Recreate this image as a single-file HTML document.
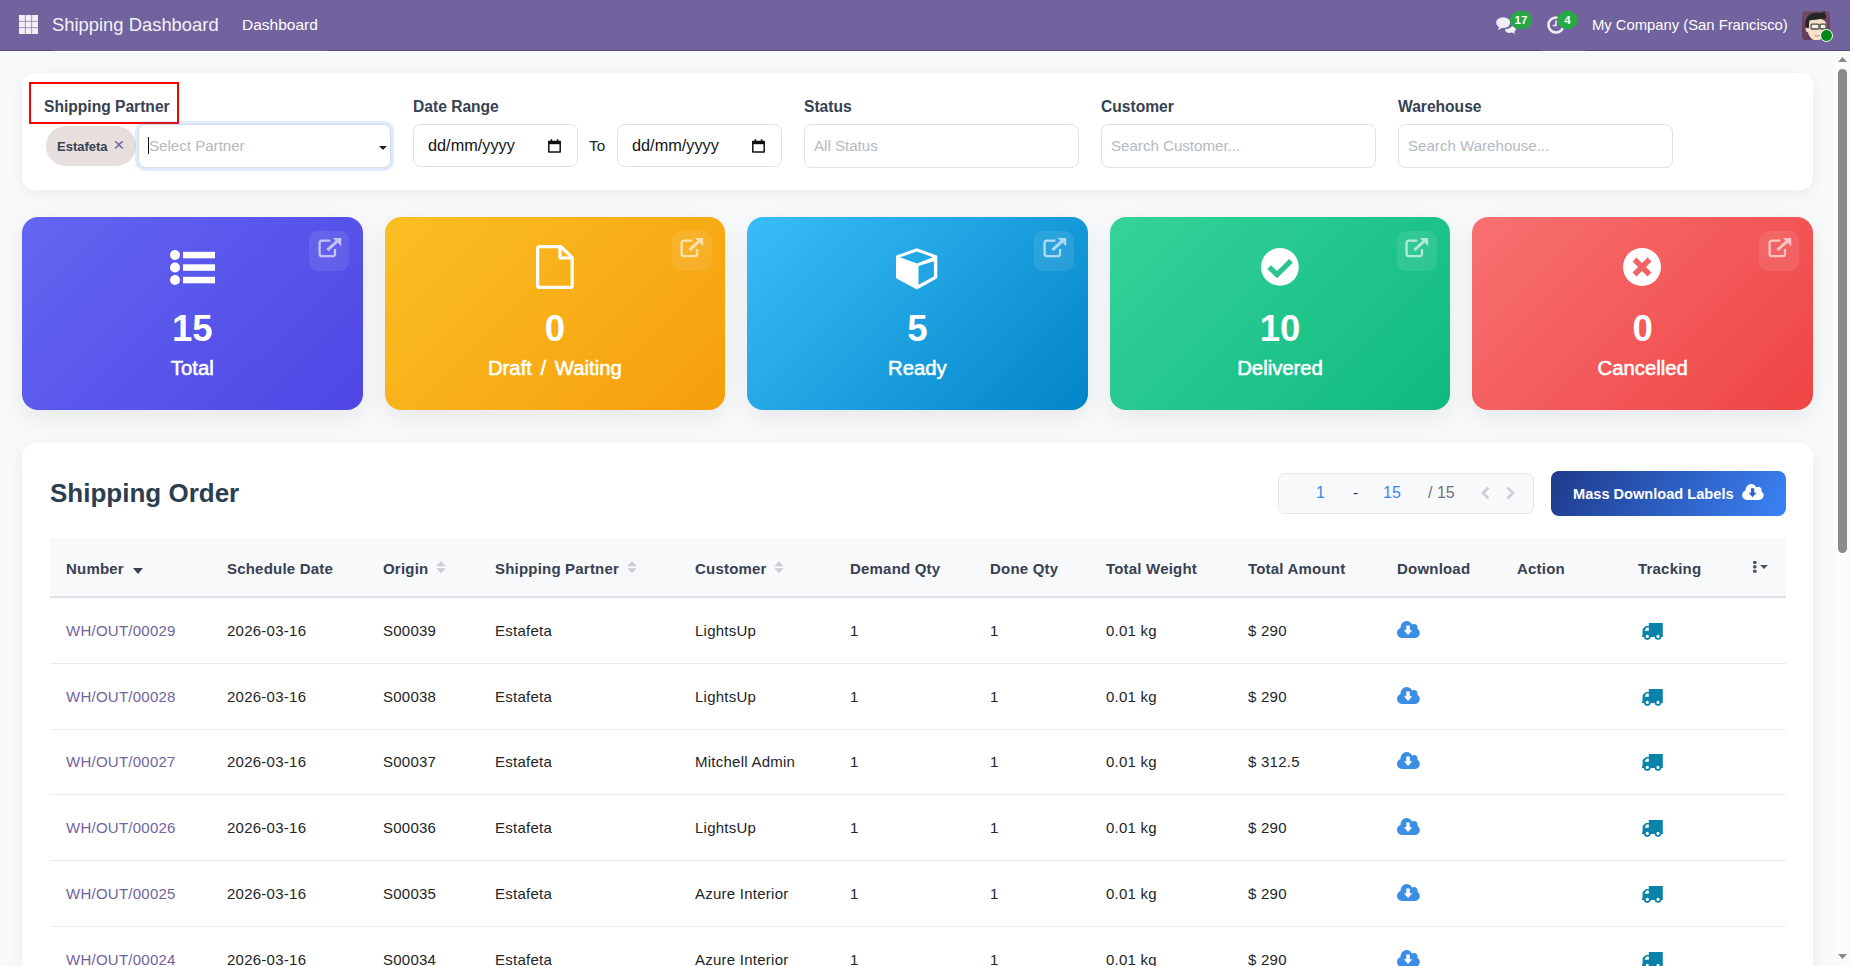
<!DOCTYPE html>
<html><head><meta charset="utf-8">
<style>
*{box-sizing:border-box;margin:0;padding:0}
html,body{width:1850px;height:966px;overflow:hidden}
body{font-family:"Liberation Sans",sans-serif;background:#f8f9fa;position:relative;color:#212529}
.abs{position:absolute}
/* navbar */
#nav{position:absolute;left:0;top:0;width:1850px;height:50px;background:#71639e}
#navline{position:absolute;left:0;top:50px;width:1850px;height:1px;background:#574a7b}
#navline2{position:absolute;left:0;top:51px;width:1835px;height:1px;background:#fff}
#nav .apps{position:absolute;left:19px;top:15px;width:19px;height:19px}
#nav .brand{position:absolute;left:52px;top:13px;font-size:18.4px;color:#f4f2f8;white-space:nowrap;line-height:24px}
#nav .menu{position:absolute;left:242px;top:15.5px;font-size:15.5px;color:#fff;line-height:18px}
#nav .company{position:absolute;left:1592px;top:15px;font-size:14.8px;color:#fff;line-height:20px;white-space:nowrap}
.badge{position:absolute;height:18px;border-radius:9px;background:#28a745;color:#fff;font-size:11.5px;font-weight:bold;text-align:center;line-height:18px}
/* scrollbar */
#sb{position:absolute;left:1835px;top:51px;width:15px;height:915px;background:#fbfbfb}
#sb .thumb{position:absolute;left:3px;top:18px;width:9px;height:484px;border-radius:5px;background:#8a8a8a}
/* filter card */
#filter{position:absolute;left:22px;top:73px;width:1791px;height:117px;background:#fff;border-radius:13px;box-shadow:0 4px 16px rgba(0,0,0,0.06)}
.flabel{position:absolute;font-size:15.6px;font-weight:bold;color:#374151;line-height:20px;white-space:nowrap;margin-top:1px}
.finput{position:absolute;top:51px;height:44px;border:1px solid #dee2e6;border-radius:7.5px;background:#fff;font-size:15.1px;line-height:41px;padding-left:9px;white-space:nowrap}
.ph{color:#b3bac2}
/* stat cards */
.stat{position:absolute;top:217px;width:340.5px;height:192.5px;border-radius:16px;color:#fff;text-align:center;box-shadow:0 8px 24px rgba(0,0,0,0.07)}
.stat .num{position:absolute;left:0;right:0;font-size:36.6px;font-weight:bold;line-height:40px}
.stat .lbl{position:absolute;left:0;right:0;font-size:20.3px;font-weight:normal;-webkit-text-stroke:0.55px #fff;line-height:24px}
.stat .ext{position:absolute;right:13.5px;top:14px;width:40px;height:40px;border-radius:9px;background:rgba(255,255,255,0.09)}
/* table card */
#tcard{position:absolute;left:22px;top:443px;width:1791px;height:600px;background:#fff;border-radius:14px;box-shadow:0 4px 16px rgba(0,0,0,0.06)}
#title{position:absolute;left:28px;top:33px;font-size:26px;font-weight:bold;color:#2c3e50;line-height:34px;white-space:nowrap}
#pager{position:absolute;left:1256px;top:30px;width:255.5px;height:41px;border:1px solid #e5e7eb;border-radius:7px;background:#f8f9fa}
#mdl{position:absolute;left:1529px;top:28px;width:235px;height:45px;border-radius:8px;background:linear-gradient(120deg,#1e3a8a 0%,#3b82f6 100%);color:#fff;font-size:14.6px;font-weight:bold;line-height:46px;white-space:nowrap}
table{position:absolute;left:28px;top:95px;width:1736px;border-collapse:collapse;table-layout:fixed}
th{height:59px;background:#f8f9fa;border-bottom:2px solid #dee2e6;text-align:left;font-size:15px;font-weight:bold;color:#374151;letter-spacing:0.2px;padding:2px 0 0 16px;white-space:nowrap;vertical-align:middle}
td{height:66px;border-bottom:1px solid #e9ecef;font-size:15px;letter-spacing:0.25px;color:#212529;padding:0 0 0 16px;white-space:nowrap;vertical-align:middle}
td.lnk{color:#71639e}
tr.r65 td{height:65px}
.sorti{display:inline-block;vertical-align:middle;margin-left:7.5px;position:relative;top:-2px}
</style></head>
<body>
<div id="nav">
  <svg class="apps" viewBox="0 0 19 19"><g fill="#f3f1f6"><rect x="0" y="0" width="5.9" height="5.9"/><rect x="6.55" y="0" width="5.9" height="5.9"/><rect x="13.1" y="0" width="5.9" height="5.9"/><rect x="0" y="6.55" width="5.9" height="5.9"/><rect x="6.55" y="6.55" width="5.9" height="5.9"/><rect x="13.1" y="6.55" width="5.9" height="5.9"/><rect x="0" y="13.1" width="5.9" height="5.9"/><rect x="6.55" y="13.1" width="5.9" height="5.9"/><rect x="13.1" y="13.1" width="5.9" height="5.9"/></g></svg>
  <div class="brand">Shipping Dashboard</div>
  <div class="menu">Dashboard</div>
  <!-- chat icon -->
  <svg class="abs" style="left:1496px;top:17px" width="21" height="17" viewBox="0 0 21 17"><g fill="#f1eff6">
    <ellipse cx="7.2" cy="5.6" rx="7" ry="5.4"/><path d="M1.5 13.2 L4 9 L7 10.5 Z"/>
    <path d="M8.8 12.2 C11 12.2 15.5 11.2 16.5 8 C18.6 9 19.8 10.4 19.8 12 C19.8 13.3 19 14.3 18 15 L19.6 16.8 L15.2 15.6 C14.5 15.8 13.6 15.9 12.9 15.9 C10.9 15.9 9.3 14.4 8.8 12.2Z"/>
  </g></svg>
  <div class="badge" style="left:1510px;top:11px;width:22px">17</div>
  <!-- clock icon -->
  <svg class="abs" style="left:1547px;top:16px" width="18" height="18" viewBox="0 0 18 18"><circle cx="9" cy="9" r="7.5" fill="none" stroke="#f1eff6" stroke-width="2.6"/><path d="M9 4.5 V9.5 H5.8" fill="none" stroke="#f1eff6" stroke-width="1.6"/></svg>
  <div class="badge" style="left:1557px;top:11px;width:21px">4</div>
  <div class="company">My Company (San Francisco)</div>
  <!-- avatar -->
  <div class="abs" style="left:1802px;top:11px;width:28px;height:29px;border-radius:4px;background:linear-gradient(180deg,#744b6a,#5f3c57);overflow:hidden">
    <svg width="28" height="29" viewBox="0 0 28 29">
      <ellipse cx="6" cy="18" rx="2.4" ry="3.3" fill="#f5d3b5"/>
      <path d="M5 14 C5 9 9 7.5 14.5 7.5 C20 7.5 24.5 9.5 24.5 15 C24.5 23 21 29.5 14.5 29.5 C8.5 29.5 5 23 5 14Z" fill="#f9e1c8"/>
      <path d="M3.5 16.5 C2.5 8 6 2 13 1.8 C17 1.6 20 2.5 22.5 0.3 C23 3 24.5 4.5 24 8 C22.5 7.6 20.5 7.5 17 8.2 C12 9 8.5 8.8 7.5 9.5 C7 12 7 15 6.8 17.5 Z" fill="#262626"/>
      <rect x="9" y="13.2" width="8" height="4.8" rx="1.2" fill="#fff" fill-opacity="0.5" stroke="#4a4a4a" stroke-width="1.3"/>
      <rect x="18" y="13.2" width="6" height="4.8" rx="1.2" fill="#fff" fill-opacity="0.5" stroke="#4a4a4a" stroke-width="1.3"/>
      <path d="M13 24.5 C14.5 25.3 16 25.3 17.5 24.5" fill="none" stroke="#9a7060" stroke-width="0.8"/>
    </svg>
  </div>
  <div class="abs" style="left:1819.5px;top:28.5px;width:13.5px;height:13.5px;border-radius:50%;background:#008a1a;border:1.5px solid #fff"></div>
</div>

<div id="navline"><div class="abs" style="left:52px;top:0;width:276px;height:1px;background:#6b5d99"></div><div class="abs" style="left:1540px;top:0;width:46px;height:1px;background:#6b5d99"></div></div>
<div id="navline2"></div>
<div id="sb">
  <svg class="abs" style="left:3px;top:6px" width="9" height="5" viewBox="0 0 9 5"><path d="M0 5 L4.5 0 L9 5Z" fill="#8a8a8a"/></svg>
  <div class="thumb"></div>
  <svg class="abs" style="left:3px;top:903px" width="9" height="5" viewBox="0 0 9 5"><path d="M0 0 L4.5 5 L9 0Z" fill="#8a8a8a"/></svg>
</div>

<div id="filter">
  <div class="abs" style="left:7px;top:9px;width:150px;height:42px;border:2px solid #ff0000"></div>
  <div class="flabel" style="left:22px;top:23px">Shipping Partner</div>
  <div class="abs" style="left:24px;top:53px;width:90px;height:40px;border-radius:20px;background:#e6dfdd;font-size:13px;font-weight:bold;color:#374151;line-height:38px;padding-left:11px;white-space:nowrap">Estafeta <span style="color:#71639e;font-weight:normal;font-size:19px;position:relative;top:0px;margin-left:2px">&#215;</span></div>
  <div class="finput" style="left:116px;width:253px;box-shadow:0 0 0 3px rgba(59,130,246,0.12),0 0 3px 3px rgba(59,130,246,0.06);border-color:#d6dde6;padding-left:9px"><span style="display:inline-block;width:1px;height:17px;background:#111;vertical-align:middle;margin-top:-3px"></span><span class="ph">Select Partner</span>
    <svg class="abs" style="right:3px;top:21px" width="8" height="4" viewBox="0 0 8 4"><path d="M0 0 L8 0 L4 4Z" fill="#212529"/></svg></div>

  <div class="flabel" style="left:391px;top:23px">Date Range</div>
  <div class="finput" style="left:391px;width:165px;padding-left:14px;color:#111;font-size:16.3px;height:43px;line-height:40px">dd/mm/yyyy
    <svg class="abs" style="left:133.5px;top:13.5px" width="13" height="14" viewBox="0 0 13 14"><path d="M0.8 2.6 H12.2 V12.9 H0.8 Z" fill="none" stroke="#111" stroke-width="1.5" stroke-linejoin="round"/><rect x="0.5" y="2" width="12" height="3.2" fill="#111"/><rect x="2.6" y="0.3" width="1.6" height="2.5" fill="#111"/><rect x="8.8" y="0.3" width="1.6" height="2.5" fill="#111"/></svg></div>
  <div class="abs" style="left:567px;top:63px;font-size:15.3px;color:#212529;line-height:20px">To</div>
  <div class="finput" style="left:595px;width:165px;padding-left:14px;color:#111;font-size:16.3px;height:43px;line-height:40px">dd/mm/yyyy
    <svg class="abs" style="left:133.5px;top:13.5px" width="13" height="14" viewBox="0 0 13 14"><path d="M0.8 2.6 H12.2 V12.9 H0.8 Z" fill="none" stroke="#111" stroke-width="1.5" stroke-linejoin="round"/><rect x="0.5" y="2" width="12" height="3.2" fill="#111"/><rect x="2.6" y="0.3" width="1.6" height="2.5" fill="#111"/><rect x="8.8" y="0.3" width="1.6" height="2.5" fill="#111"/></svg></div>

  <div class="flabel" style="left:782px;top:23px">Status</div>
  <div class="finput ph" style="left:782px;width:275px">All Status</div>

  <div class="flabel" style="left:1079px;top:23px">Customer</div>
  <div class="finput ph" style="left:1079px;width:275px">Search Customer...</div>

  <div class="flabel" style="left:1376px;top:23px">Warehouse</div>
  <div class="finput ph" style="left:1376px;width:275px">Search Warehouse...</div>
</div>

<div class="stat" style="left:22px;background:linear-gradient(135deg,#6366f1 0%,#4f46e5 100%)"><svg class="abs" style="left:148px;top:32.5px" width="45" height="35" viewBox="0 0 45 35"><g fill="#fff"><circle cx="5" cy="5" r="5"/><circle cx="5" cy="17.5" r="5"/><circle cx="5" cy="30" r="5"/><rect x="13" y="1.8" width="32" height="6.5"/><rect x="13" y="14.3" width="32" height="6.5"/><rect x="13" y="26.8" width="32" height="6.5"/></g></svg><div class="num" style="top:92px">15</div><div class="lbl" style="top:139px">Total</div><div class="ext"><svg class="abs" style="left:8.5px;top:6.5px" width="24" height="21" viewBox="0 0 24 21"><path d="M12.4 2.6 H4 C2.6 2.6 1.6 3.6 1.6 5 V15.8 C1.6 17.2 2.6 18.2 4 18.2 H14.6 C16 18.2 17 17.2 17 15.8 V11" fill="none" stroke="rgba(255,255,255,0.62)" stroke-width="2.3"/><path d="M9.4 12.2 L18.6 3.6" stroke="rgba(255,255,255,0.62)" stroke-width="3"/><path d="M14.8 0 H23.2 V8.2 Z" fill="rgba(255,255,255,0.62)"/></svg></div></div>
<div class="stat" style="left:384.6px;background:linear-gradient(135deg,#fbbf24 0%,#f59e0b 100%)"><svg class="abs" style="left:151.2px;top:28px" width="38" height="44" viewBox="0 0 38 44"><path d="M1.6 3.6 C1.6 2.5 2.5 1.6 3.6 1.6 H25 L36.2 12.6 V40.4 C36.2 41.5 35.3 42.4 34.2 42.4 H3.6 C2.5 42.4 1.6 41.5 1.6 40.4 Z M24 1.6 V12 C24 12.6 24.4 13 25 13 H36.2" fill="none" stroke="#fff" stroke-width="3.2" stroke-linejoin="round"/></svg><div class="num" style="top:92px">0</div><div class="lbl" style="top:139px;word-spacing:3px">Draft / Waiting</div><div class="ext"><svg class="abs" style="left:8.5px;top:6.5px" width="24" height="21" viewBox="0 0 24 21"><path d="M12.4 2.6 H4 C2.6 2.6 1.6 3.6 1.6 5 V15.8 C1.6 17.2 2.6 18.2 4 18.2 H14.6 C16 18.2 17 17.2 17 15.8 V11" fill="none" stroke="rgba(255,255,255,0.62)" stroke-width="2.3"/><path d="M9.4 12.2 L18.6 3.6" stroke="rgba(255,255,255,0.62)" stroke-width="3"/><path d="M14.8 0 H23.2 V8.2 Z" fill="rgba(255,255,255,0.62)"/></svg></div></div>
<div class="stat" style="left:747.2px;background:linear-gradient(135deg,#38bdf8 0%,#0284c7 100%)"><svg class="abs" style="left:148.6px;top:31px" width="42" height="42" viewBox="0 0 42 42"><path fill="#fff" fill-rule="evenodd" d="M20.9 0.2 L40.2 7.2 C41 7.5 41.3 8 41.3 8.8 V29 C41.3 29.8 41 30.3 40.3 30.7 L21.8 41 C21.2 41.3 20.6 41.3 20 41 L1 30.7 C0.3 30.3 0 29.8 0 29 V8.8 C0 8 0.3 7.5 1.1 7.2 Z M4 9.2 L20.9 15.6 L36.9 9.2 L20.9 3.6 Z M22.5 18.1 V36.7 L37.9 28.6 V13.2 Z"/></svg><div class="num" style="top:92px">5</div><div class="lbl" style="top:139px">Ready</div><div class="ext"><svg class="abs" style="left:8.5px;top:6.5px" width="24" height="21" viewBox="0 0 24 21"><path d="M12.4 2.6 H4 C2.6 2.6 1.6 3.6 1.6 5 V15.8 C1.6 17.2 2.6 18.2 4 18.2 H14.6 C16 18.2 17 17.2 17 15.8 V11" fill="none" stroke="rgba(255,255,255,0.62)" stroke-width="2.3"/><path d="M9.4 12.2 L18.6 3.6" stroke="rgba(255,255,255,0.62)" stroke-width="3"/><path d="M14.8 0 H23.2 V8.2 Z" fill="rgba(255,255,255,0.62)"/></svg></div></div>
<div class="stat" style="left:1109.8px;background:linear-gradient(135deg,#34d399 0%,#10b981 100%)"><svg class="abs" style="left:151.2px;top:31.2px" width="38" height="38" viewBox="0 0 38 38"><circle cx="18.9" cy="18.9" r="18.9" fill="#fff"/><path d="M8.2 19.2 L16 26.6 L30 12.8" fill="none" stroke="#2bc48d" stroke-width="5.2"/></svg><div class="num" style="top:92px">10</div><div class="lbl" style="top:139px">Delivered</div><div class="ext"><svg class="abs" style="left:8.5px;top:6.5px" width="24" height="21" viewBox="0 0 24 21"><path d="M12.4 2.6 H4 C2.6 2.6 1.6 3.6 1.6 5 V15.8 C1.6 17.2 2.6 18.2 4 18.2 H14.6 C16 18.2 17 17.2 17 15.8 V11" fill="none" stroke="rgba(255,255,255,0.62)" stroke-width="2.3"/><path d="M9.4 12.2 L18.6 3.6" stroke="rgba(255,255,255,0.62)" stroke-width="3"/><path d="M14.8 0 H23.2 V8.2 Z" fill="rgba(255,255,255,0.62)"/></svg></div></div>
<div class="stat" style="left:1472.4px;background:linear-gradient(135deg,#f87171 0%,#ef4444 100%)"><svg class="abs" style="left:151px;top:31.2px" width="38" height="38" viewBox="0 0 38 38"><circle cx="19" cy="19" r="19" fill="#fff"/><path d="M11.5 11.5 L26.5 26.5 M26.5 11.5 L11.5 26.5" fill="none" stroke="#f26464" stroke-width="5.6"/></svg><div class="num" style="top:92px">0</div><div class="lbl" style="top:139px">Cancelled</div><div class="ext"><svg class="abs" style="left:8.5px;top:6.5px" width="24" height="21" viewBox="0 0 24 21"><path d="M12.4 2.6 H4 C2.6 2.6 1.6 3.6 1.6 5 V15.8 C1.6 17.2 2.6 18.2 4 18.2 H14.6 C16 18.2 17 17.2 17 15.8 V11" fill="none" stroke="rgba(255,255,255,0.62)" stroke-width="2.3"/><path d="M9.4 12.2 L18.6 3.6" stroke="rgba(255,255,255,0.62)" stroke-width="3"/><path d="M14.8 0 H23.2 V8.2 Z" fill="rgba(255,255,255,0.62)"/></svg></div></div>
<div id="tcard">
  <div id="title">Shipping Order</div>
  <div id="pager">
    <div class="abs" style="left:37px;top:9px;font-size:16px;color:#3b82f6;line-height:20px">1</div>
    <div class="abs" style="left:74px;top:9px;font-size:16px;color:#374151;line-height:20px">-</div>
    <div class="abs" style="left:104px;top:9px;font-size:16px;color:#3b82f6;line-height:20px">15</div>
    <div class="abs" style="left:149px;top:9px;font-size:16px;color:#6b7280;line-height:20px">/ 15</div>
    <svg class="abs" style="left:201px;top:11.5px" width="11" height="14" viewBox="0 0 11 14"><path d="M8.5 1.5 L3 7 L8.5 12.5" fill="none" stroke="#ccd0d5" stroke-width="2.6"/></svg>
    <svg class="abs" style="left:226px;top:11.5px" width="11" height="14" viewBox="0 0 11 14"><path d="M2.5 1.5 L8 7 L2.5 12.5" fill="none" stroke="#ccd0d5" stroke-width="2.6"/></svg>
  </div>
  <div id="mdl"><span style="position:absolute;left:22px">Mass Download Labels</span><span class="abs" style="left:191px;top:13px"><svg width="22" height="16" viewBox="0 0 23 17" style="display:block"><path fill="#fff" d="M5 17 C2.2 17 0 14.6 0 11.8 C0 9.5 1.5 7.5 3.5 6.9 C3.6 3.1 6.3 0 9.6 0 C12 0 14 1.4 15 3.6 C15.6 3.2 16.4 3 17.2 3 C19.1 3 20.6 4.6 20.6 6.5 C20.6 7 20.5 7.4 20.3 7.8 C21.9 8.7 22.8 10.3 22.8 12 C22.8 14.8 20.6 17 17.8 17 Z"/><path fill="#2f63cf" d="M9.3 4.6 H12.8 V9.2 H15.3 L11.05 14 L6.8 9.2 H9.3 Z"/></svg></span></div>
  <table><colgroup><col style="width:161px"><col style="width:156px"><col style="width:112px"><col style="width:200px"><col style="width:155px"><col style="width:140px"><col style="width:116px"><col style="width:142px"><col style="width:149px"><col style="width:120px"><col style="width:121px"><col style="width:115px"><col style="width:49px"></colgroup><tr><th>Number <svg class="sorti" style="margin-left:5px;top:1px" width="10" height="6" viewBox="0 0 10 6"><path d="M0 0 L10 0 L5 6Z" fill="#374151"/></svg></th><th>Schedule Date</th><th>Origin<svg class="sorti" width="10" height="13" viewBox="0 0 10 13"><path d="M0.3 5.3 L5 0.3 L9.7 5.3 Z M0.3 7.2 L5 12.2 L9.7 7.2 Z" fill="#c9ccd1"/></svg></th><th>Shipping Partner<svg class="sorti" width="10" height="13" viewBox="0 0 10 13"><path d="M0.3 5.3 L5 0.3 L9.7 5.3 Z M0.3 7.2 L5 12.2 L9.7 7.2 Z" fill="#c9ccd1"/></svg></th><th>Customer<svg class="sorti" width="10" height="13" viewBox="0 0 10 13"><path d="M0.3 5.3 L5 0.3 L9.7 5.3 Z M0.3 7.2 L5 12.2 L9.7 7.2 Z" fill="#c9ccd1"/></svg></th><th>Demand Qty</th><th>Done Qty</th><th>Total Weight</th><th>Total Amount</th><th>Download</th><th>Action</th><th>Tracking</th><th><svg style="display:block;margin-left:0px;margin-top:-3px" width="17" height="14" viewBox="0 0 17 14"><g fill="#4b5563"><rect x="0" y="0.9" width="3.6" height="3" rx="0.8"/><rect x="0" y="5.1" width="3.6" height="3.4" rx="1.6"/><rect x="0" y="9.7" width="3.6" height="3" rx="0.8"/><path d="M7 5 L15 5 L11 9Z"/></g></svg></th></tr><tr><td class="lnk">WH/OUT/00029</td><td>2026-03-16</td><td>S00039</td><td>Estafeta</td><td>LightsUp</td><td>1</td><td>1</td><td>0.01 kg</td><td>$ 290</td><td><svg width="23" height="17" viewBox="0 0 23 17" style="display:block;position:relative;top:-0.7px"><path fill="#3a8ee6" d="M5 17 C2.2 17 0 14.6 0 11.8 C0 9.5 1.5 7.5 3.5 6.9 C3.6 3.1 6.3 0 9.6 0 C12 0 14 1.4 15 3.6 C15.6 3.2 16.4 3 17.2 3 C19.1 3 20.6 4.6 20.6 6.5 C20.6 7 20.5 7.4 20.3 7.8 C21.9 8.7 22.8 10.3 22.8 12 C22.8 14.8 20.6 17 17.8 17 Z"/><path fill="#fff" d="M9.3 4.6 H12.8 V9.2 H15.3 L11.05 14 L6.8 9.2 H9.3 Z"/></svg></td><td></td><td style="padding-left:20px"><svg width="21" height="17" viewBox="0 0 21 17" style="display:block;position:relative;top:1px"><path fill="#0a82aa" fill-rule="evenodd" d="M6.8 0 H20.8 V13.9 H19.2 A3.4 3.4 0 0 1 12.8 13.9 H8.6 A3.4 3.4 0 0 1 2 13.9 H0 V12.2 H0.6 V6 L3.9 3.1 H6.8 Z M2.6 7.7 H6.8 V4.6 H4.4 Z M5.3 11.7 A1.6 1.6 0 1 0 5.31 11.7 Z"/><circle cx="5.3" cy="13.4" r="3.3" fill="#0a82aa"/><circle cx="5.3" cy="13.4" r="1.55" fill="#fff"/><circle cx="16" cy="13.4" r="3.3" fill="#0a82aa"/><circle cx="16" cy="13.4" r="1.55" fill="#fff"/></svg></td><td></td></tr><tr><td class="lnk">WH/OUT/00028</td><td>2026-03-16</td><td>S00038</td><td>Estafeta</td><td>LightsUp</td><td>1</td><td>1</td><td>0.01 kg</td><td>$ 290</td><td><svg width="23" height="17" viewBox="0 0 23 17" style="display:block;position:relative;top:-0.7px"><path fill="#3a8ee6" d="M5 17 C2.2 17 0 14.6 0 11.8 C0 9.5 1.5 7.5 3.5 6.9 C3.6 3.1 6.3 0 9.6 0 C12 0 14 1.4 15 3.6 C15.6 3.2 16.4 3 17.2 3 C19.1 3 20.6 4.6 20.6 6.5 C20.6 7 20.5 7.4 20.3 7.8 C21.9 8.7 22.8 10.3 22.8 12 C22.8 14.8 20.6 17 17.8 17 Z"/><path fill="#fff" d="M9.3 4.6 H12.8 V9.2 H15.3 L11.05 14 L6.8 9.2 H9.3 Z"/></svg></td><td></td><td style="padding-left:20px"><svg width="21" height="17" viewBox="0 0 21 17" style="display:block;position:relative;top:1px"><path fill="#0a82aa" fill-rule="evenodd" d="M6.8 0 H20.8 V13.9 H19.2 A3.4 3.4 0 0 1 12.8 13.9 H8.6 A3.4 3.4 0 0 1 2 13.9 H0 V12.2 H0.6 V6 L3.9 3.1 H6.8 Z M2.6 7.7 H6.8 V4.6 H4.4 Z M5.3 11.7 A1.6 1.6 0 1 0 5.31 11.7 Z"/><circle cx="5.3" cy="13.4" r="3.3" fill="#0a82aa"/><circle cx="5.3" cy="13.4" r="1.55" fill="#fff"/><circle cx="16" cy="13.4" r="3.3" fill="#0a82aa"/><circle cx="16" cy="13.4" r="1.55" fill="#fff"/></svg></td><td></td></tr><tr class="r65"><td class="lnk">WH/OUT/00027</td><td>2026-03-16</td><td>S00037</td><td>Estafeta</td><td>Mitchell Admin</td><td>1</td><td>1</td><td>0.01 kg</td><td>$ 312.5</td><td><svg width="23" height="17" viewBox="0 0 23 17" style="display:block;position:relative;top:-0.7px"><path fill="#3a8ee6" d="M5 17 C2.2 17 0 14.6 0 11.8 C0 9.5 1.5 7.5 3.5 6.9 C3.6 3.1 6.3 0 9.6 0 C12 0 14 1.4 15 3.6 C15.6 3.2 16.4 3 17.2 3 C19.1 3 20.6 4.6 20.6 6.5 C20.6 7 20.5 7.4 20.3 7.8 C21.9 8.7 22.8 10.3 22.8 12 C22.8 14.8 20.6 17 17.8 17 Z"/><path fill="#fff" d="M9.3 4.6 H12.8 V9.2 H15.3 L11.05 14 L6.8 9.2 H9.3 Z"/></svg></td><td></td><td style="padding-left:20px"><svg width="21" height="17" viewBox="0 0 21 17" style="display:block;position:relative;top:1px"><path fill="#0a82aa" fill-rule="evenodd" d="M6.8 0 H20.8 V13.9 H19.2 A3.4 3.4 0 0 1 12.8 13.9 H8.6 A3.4 3.4 0 0 1 2 13.9 H0 V12.2 H0.6 V6 L3.9 3.1 H6.8 Z M2.6 7.7 H6.8 V4.6 H4.4 Z M5.3 11.7 A1.6 1.6 0 1 0 5.31 11.7 Z"/><circle cx="5.3" cy="13.4" r="3.3" fill="#0a82aa"/><circle cx="5.3" cy="13.4" r="1.55" fill="#fff"/><circle cx="16" cy="13.4" r="3.3" fill="#0a82aa"/><circle cx="16" cy="13.4" r="1.55" fill="#fff"/></svg></td><td></td></tr><tr><td class="lnk">WH/OUT/00026</td><td>2026-03-16</td><td>S00036</td><td>Estafeta</td><td>LightsUp</td><td>1</td><td>1</td><td>0.01 kg</td><td>$ 290</td><td><svg width="23" height="17" viewBox="0 0 23 17" style="display:block;position:relative;top:-0.7px"><path fill="#3a8ee6" d="M5 17 C2.2 17 0 14.6 0 11.8 C0 9.5 1.5 7.5 3.5 6.9 C3.6 3.1 6.3 0 9.6 0 C12 0 14 1.4 15 3.6 C15.6 3.2 16.4 3 17.2 3 C19.1 3 20.6 4.6 20.6 6.5 C20.6 7 20.5 7.4 20.3 7.8 C21.9 8.7 22.8 10.3 22.8 12 C22.8 14.8 20.6 17 17.8 17 Z"/><path fill="#fff" d="M9.3 4.6 H12.8 V9.2 H15.3 L11.05 14 L6.8 9.2 H9.3 Z"/></svg></td><td></td><td style="padding-left:20px"><svg width="21" height="17" viewBox="0 0 21 17" style="display:block;position:relative;top:1px"><path fill="#0a82aa" fill-rule="evenodd" d="M6.8 0 H20.8 V13.9 H19.2 A3.4 3.4 0 0 1 12.8 13.9 H8.6 A3.4 3.4 0 0 1 2 13.9 H0 V12.2 H0.6 V6 L3.9 3.1 H6.8 Z M2.6 7.7 H6.8 V4.6 H4.4 Z M5.3 11.7 A1.6 1.6 0 1 0 5.31 11.7 Z"/><circle cx="5.3" cy="13.4" r="3.3" fill="#0a82aa"/><circle cx="5.3" cy="13.4" r="1.55" fill="#fff"/><circle cx="16" cy="13.4" r="3.3" fill="#0a82aa"/><circle cx="16" cy="13.4" r="1.55" fill="#fff"/></svg></td><td></td></tr><tr><td class="lnk">WH/OUT/00025</td><td>2026-03-16</td><td>S00035</td><td>Estafeta</td><td>Azure Interior</td><td>1</td><td>1</td><td>0.01 kg</td><td>$ 290</td><td><svg width="23" height="17" viewBox="0 0 23 17" style="display:block;position:relative;top:-0.7px"><path fill="#3a8ee6" d="M5 17 C2.2 17 0 14.6 0 11.8 C0 9.5 1.5 7.5 3.5 6.9 C3.6 3.1 6.3 0 9.6 0 C12 0 14 1.4 15 3.6 C15.6 3.2 16.4 3 17.2 3 C19.1 3 20.6 4.6 20.6 6.5 C20.6 7 20.5 7.4 20.3 7.8 C21.9 8.7 22.8 10.3 22.8 12 C22.8 14.8 20.6 17 17.8 17 Z"/><path fill="#fff" d="M9.3 4.6 H12.8 V9.2 H15.3 L11.05 14 L6.8 9.2 H9.3 Z"/></svg></td><td></td><td style="padding-left:20px"><svg width="21" height="17" viewBox="0 0 21 17" style="display:block;position:relative;top:1px"><path fill="#0a82aa" fill-rule="evenodd" d="M6.8 0 H20.8 V13.9 H19.2 A3.4 3.4 0 0 1 12.8 13.9 H8.6 A3.4 3.4 0 0 1 2 13.9 H0 V12.2 H0.6 V6 L3.9 3.1 H6.8 Z M2.6 7.7 H6.8 V4.6 H4.4 Z M5.3 11.7 A1.6 1.6 0 1 0 5.31 11.7 Z"/><circle cx="5.3" cy="13.4" r="3.3" fill="#0a82aa"/><circle cx="5.3" cy="13.4" r="1.55" fill="#fff"/><circle cx="16" cy="13.4" r="3.3" fill="#0a82aa"/><circle cx="16" cy="13.4" r="1.55" fill="#fff"/></svg></td><td></td></tr><tr><td class="lnk">WH/OUT/00024</td><td>2026-03-16</td><td>S00034</td><td>Estafeta</td><td>Azure Interior</td><td>1</td><td>1</td><td>0.01 kg</td><td>$ 290</td><td><svg width="23" height="17" viewBox="0 0 23 17" style="display:block;position:relative;top:-0.7px"><path fill="#3a8ee6" d="M5 17 C2.2 17 0 14.6 0 11.8 C0 9.5 1.5 7.5 3.5 6.9 C3.6 3.1 6.3 0 9.6 0 C12 0 14 1.4 15 3.6 C15.6 3.2 16.4 3 17.2 3 C19.1 3 20.6 4.6 20.6 6.5 C20.6 7 20.5 7.4 20.3 7.8 C21.9 8.7 22.8 10.3 22.8 12 C22.8 14.8 20.6 17 17.8 17 Z"/><path fill="#fff" d="M9.3 4.6 H12.8 V9.2 H15.3 L11.05 14 L6.8 9.2 H9.3 Z"/></svg></td><td></td><td style="padding-left:20px"><svg width="21" height="17" viewBox="0 0 21 17" style="display:block;position:relative;top:1px"><path fill="#0a82aa" fill-rule="evenodd" d="M6.8 0 H20.8 V13.9 H19.2 A3.4 3.4 0 0 1 12.8 13.9 H8.6 A3.4 3.4 0 0 1 2 13.9 H0 V12.2 H0.6 V6 L3.9 3.1 H6.8 Z M2.6 7.7 H6.8 V4.6 H4.4 Z M5.3 11.7 A1.6 1.6 0 1 0 5.31 11.7 Z"/><circle cx="5.3" cy="13.4" r="3.3" fill="#0a82aa"/><circle cx="5.3" cy="13.4" r="1.55" fill="#fff"/><circle cx="16" cy="13.4" r="3.3" fill="#0a82aa"/><circle cx="16" cy="13.4" r="1.55" fill="#fff"/></svg></td><td></td></tr></table>
</div>
</body></html>
